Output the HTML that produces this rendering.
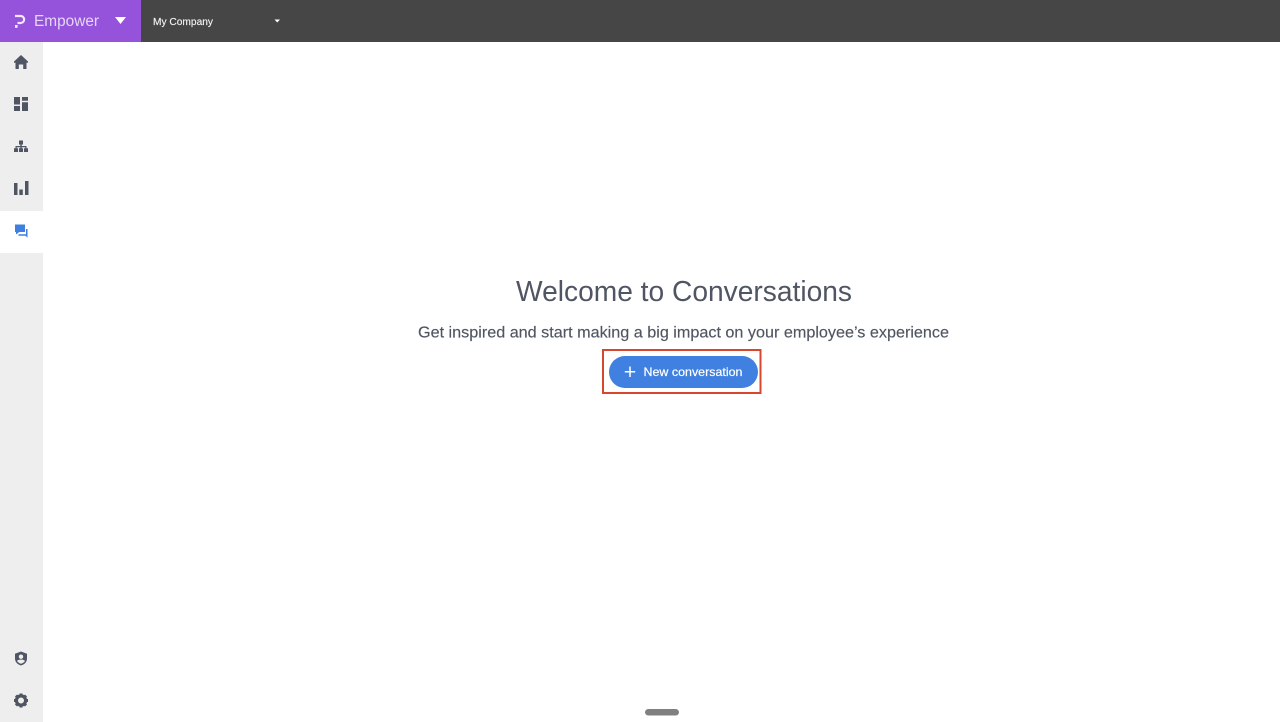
<!DOCTYPE html>
<html lang="en">
<head>
<meta charset="utf-8">
<title>Welcome to Conversations</title>
<style>
html,body{margin:0;padding:0;background:#fff;width:1280px;height:722px;overflow:hidden}
svg{display:block}
text{font-family:"Liberation Sans",sans-serif}
</style>
</head>
<body>
<svg width="1280" height="722" viewBox="0 0 1280 722" xmlns="http://www.w3.org/2000/svg">
  <rect width="1280" height="722" fill="#fff"/>
  <!-- top bar -->
  <rect width="1280" height="42" fill="#464646"/>
  <rect width="141" height="42" fill="#9552db"/>
  <path d="M15 16H20.500C25.300 16 25.300 23 20.500 23H17.500" fill="none" stroke="#f3e9fb" stroke-width="2.200"/>
  <rect x="15" y="25" width="2.600" height="2.800" fill="#f3e9fb"/>
  <text x="34" y="26" font-size="15.500" fill="#e6d5f6" textLength="65" lengthAdjust="spacingAndGlyphs">Empower</text>
  <path d="M115 17H126L120.500 24Z" fill="#fff"/>
  <text x="153" y="24.800" font-size="10.500" fill="#f2f2f2" stroke="#f2f2f2" stroke-width=".15" textLength="60" lengthAdjust="spacingAndGlyphs">My Company</text>
  <path d="M274.500 19.500H280L277.250 22.500Z" fill="#fff"/>

  <!-- sidebar -->
  <rect y="42" width="43" height="680" fill="#eeeeee"/>
  <rect y="211" width="43" height="42" fill="#ffffff"/>

  <!-- home -->
  <path d="M21 55L28 61.500V62.800H26.500V69H23.200V64.500H18.800V69H15.500V62.800H14V61.500Z" fill="#4f5562"/>
  <!-- dashboard -->
  <path d="M14 97H20V104.500H14ZM14 106H20V111H14ZM22 97H28V100.800H22ZM22 102.300H28V111H22Z" fill="#4f5562"/>
  <!-- org chart -->
  <path d="M19 140.500H23V144.500H21.700V146H26.500V148.300H28V152H24V148.300H25.300V147.300H21.700V148.300H23V152H19V148.300H20.300V147.300H16.700V148.300H18V152H14V148.300H15.500V146H20.300V144.500H19Z" fill="#4f5562"/>
  <!-- bars -->
  <path d="M14 183H17.500V195H14ZM19.300 189.500H22.800V195H19.300ZM25 181H28.500V195H25Z" fill="#4f5562"/>
  <!-- conversations -->
  <path d="M15 224.500H25V232H15Z" fill="#3f7fe0"/>
  <path d="M16 231.500H20L16 234.500Z" fill="#3f7fe0"/>
  <path d="M18.500 234.300H26V229H27.500V237.500L25.300 235.800H18.500Z" fill="#3f7fe0"/>
  <!-- shield -->
  <path d="M21 651.500L27 653.700V658.500C27 662 24.500 664.500 21 665.500C17.500 664.500 15 662 15 658.500V653.700Z" fill="#4f5562"/>
  <circle cx="21" cy="656.700" r="2.200" fill="#eeeeee"/>
  <path d="M17 661C18 659.800 19.500 659.600 21 659.600C22.500 659.600 24 659.800 25 661C24 662.500 22.500 663.300 21 663.800C19.500 663.300 18 662.500 17 661Z" fill="#eeeeee"/>
  <!-- gear -->
  <circle cx="21" cy="700.500" r="4.600" fill="none" stroke="#4f5562" stroke-width="3.200"/>
  <g stroke="#4f5562" stroke-width="3">
    <path d="M21 693.500V696M21 705V707.500M14 700.500H16.500M25.500 700.500H28M16 695.500L17.800 697.300M24.200 703.700L26 705.500M26 695.500L24.200 697.300M17.800 703.700L16 705.500"/>
  </g>

  <!-- content -->
  <text x="516" y="301" font-size="29" fill="#4f5562" textLength="336" lengthAdjust="spacingAndGlyphs">Welcome to Conversations</text>
  <text x="418" y="337.500" font-size="16" fill="#4f5562" stroke="#4f5562" stroke-width=".15" textLength="531" lengthAdjust="spacingAndGlyphs">Get inspired and start making a big impact on your employee’s experience</text>

  <!-- button -->
  <rect x="603" y="350" width="157.500" height="43" fill="none" stroke="#d5472f" stroke-width="2"/>
  <rect x="609" y="356" width="149" height="32" rx="16" fill="#3f80e0"/>
  <path d="M630 366.500V377M624.800 371.800H635.200" stroke="#fff" stroke-width="1.500" fill="none"/>
  <text x="643.500" y="376" font-size="12" fill="#ffffff" stroke="#fff" stroke-width=".2" textLength="99" lengthAdjust="spacingAndGlyphs">New conversation</text>

  <!-- handle -->
  <rect x="645" y="709" width="34" height="6.500" rx="3.250" fill="#808080"/>
</svg>
</body>
</html>
